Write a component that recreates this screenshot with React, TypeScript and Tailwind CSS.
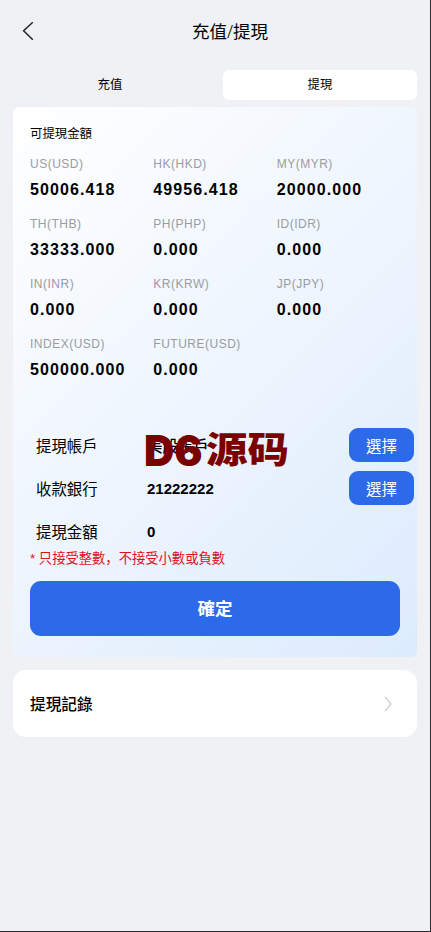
import { useState } from 'react';
import clsx from 'clsx';

const balances = [
  { label: 'US(USD)', value: '50006.418' },
  { label: 'HK(HKD)', value: '49956.418' },
  { label: 'MY(MYR)', value: '20000.000' },
  { label: 'TH(THB)', value: '33333.000' },
  { label: 'PH(PHP)', value: '0.000' },
  { label: 'ID(IDR)', value: '0.000' },
  { label: 'IN(INR)', value: '0.000' },
  { label: 'KR(KRW)', value: '0.000' },
  { label: 'JP(JPY)', value: '0.000' },
  { label: 'INDEX(USD)', value: '500000.000' },
  { label: 'FUTURE(USD)', value: '0.000' },
];

const tabs = ['充值', '提現'];

function SelectButton() {
  return (
    <button className="h-[34px] w-[65px] shrink-0 rounded-[9px] bg-[#2d6ae9] pt-[3px] text-[15.5px] leading-none text-white">
      選擇
    </button>
  );
}

export default function App() {
  const [active, setActive] = useState('提現');

  return (
    <div className="h-screen w-full overflow-hidden border-r border-b border-[#2b2b2e] bg-[#f0f1f5] font-['Liberation_Sans','Noto_Sans_CJK_TC',sans-serif] text-black">
      {/* Header */}
      <header className="flex h-[62px] items-center pl-[22px]">
        <svg className="h-5 w-3 shrink-0" viewBox="0 0 12 20" fill="none" stroke="#222" strokeWidth="1.5">
          <path d="M10.8 1.2 1.6 9.7l9.2 9.1" />
        </svg>
        <h1 className="grow pt-px pr-1 text-center text-[17.5px] leading-6">
          充值<span className="font-['Noto_Sans',sans-serif] font-light">/</span>提現
        </h1>
      </header>

      <main className="px-[13px] pt-2">
        {/* Tabs */}
        <div className="grid grid-cols-2 gap-4">
          {tabs.map((tab) => (
            <button
              key={tab}
              onClick={() => setActive(tab)}
              className={clsx('h-[30px] rounded-[6px] pt-px text-[12.4px]', active === tab && 'bg-white')}
            >
              {tab}
            </button>
          ))}
        </div>

        {/* Withdraw card */}
        <section className="mt-[7px] h-[550px] rounded-[6px] bg-linear-[135deg,#ffffff_0%,#eef5fe_50%,#dcebfd_100%] px-[17px] pt-[18px]">
          <p className="text-[12.4px] leading-[18px]">可提現金額</p>

          <div className="mt-3 grid grid-cols-3">
            {balances.map((item) => (
              <div key={item.label} className="h-[60px]">
                <p className="text-[12px] leading-[18px] tracking-[0.5px] text-[#999ca1]">{item.label}</p>
                <p className="mt-[7px] text-[16px] leading-5 font-bold tracking-[1.1px]">{item.value}</p>
              </div>
            ))}
          </div>

          <div className="relative -mr-[14px] mt-[33px] pl-[6px]">
            <div className="flex h-[34px] items-center">
              <span className="w-[111px] pt-[3px] text-[15.4px]">提現帳戶</span>
              <span className="grow pt-[3px] text-[15.4px] font-medium">美股賬戶</span>
              <SelectButton />
            </div>
            <div className="mt-[9px] flex h-[34px] items-center">
              <span className="w-[111px] pt-[3px] text-[15.4px]">收款銀行</span>
              <span className="grow pt-[3px] text-[15px] font-bold">21222222</span>
              <SelectButton />
            </div>
            <div className="mt-[9px] flex h-[34px] items-center">
              <span className="w-[111px] pt-[3px] text-[15.4px]">提現金額</span>
              <span className="grow pt-[3px] text-[15px] font-bold">0</span>
            </div>

            {/* Watermark over the account row */}
            <div className="pointer-events-none absolute top-[-2px] left-[114px] flex h-12 items-center leading-none font-black whitespace-nowrap text-[#7a0000]">
              <span className="w-[62px] pt-px font-['Inter',sans-serif] text-[42px]">D6</span>
              <span className="mb-1 inline-block scale-y-[0.87] font-['Noto_Sans_CJK_SC',sans-serif] text-[41.5px]">源码</span>
            </div>
          </div>

          <p className="mt-px text-[13.3px] leading-[18px] text-[#e0101c]">
            * 只接受整數<span className="font-['Noto_Sans_CJK_SC',sans-serif]">，</span>不接受小數或負數
          </p>

          <button className="mt-[13px] h-[55px] w-full rounded-[11px] bg-[#2d6ae9] pt-px text-[17.5px] font-bold text-white">
            確定
          </button>
        </section>

        {/* Withdraw history */}
        <a className="mt-[13px] flex h-[67px] items-center justify-between rounded-[13px] bg-white pr-6 pl-[17px]">
          <span className="pt-[2px] text-[15.7px] font-medium">提現記錄</span>
          <svg className="h-4 w-[10px]" viewBox="0 0 10 16" fill="none" stroke="#d3d3d5" strokeWidth="1.5">
            <path d="m2 1 6 7-6 7" />
          </svg>
        </a>
      </main>
    </div>
  );
}
